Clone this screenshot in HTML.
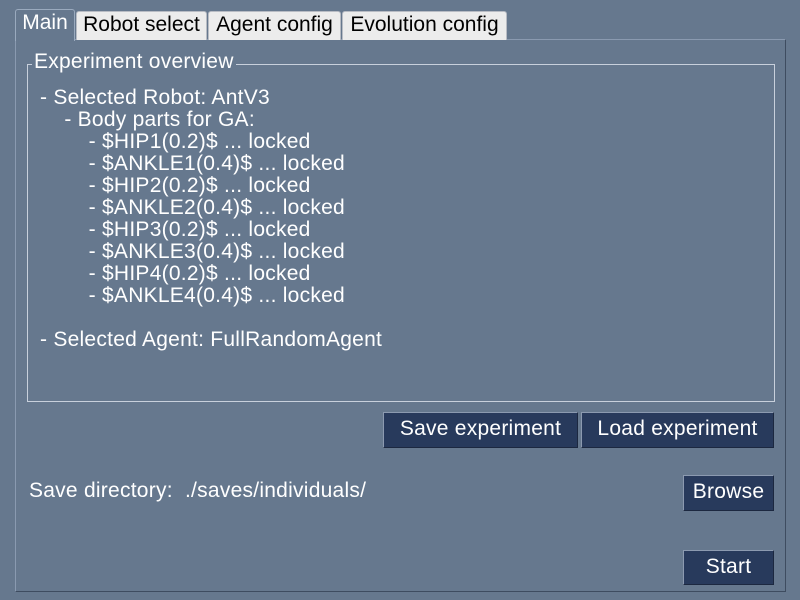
<!DOCTYPE html>
<html><head><style>
*{margin:0;padding:0;box-sizing:border-box}
body{width:800px;height:600px;background:#66788e;font-family:"Liberation Sans",sans-serif;font-size:21px;letter-spacing:0.25px;color:#fff;position:relative;overflow:hidden}
.a{position:absolute;white-space:pre}
.panel{position:absolute;left:15px;top:39px;width:771px;height:553px;border:1px solid #8a9ab0;border-right-color:#3e4c60;border-bottom-color:#3e4c60}
.tab{position:absolute;top:11px;height:29px;background:#ececec;color:#000;border:1px solid #b8bcc4;border-bottom:none;border-radius:3px 3px 0 0;text-align:center;line-height:25px;letter-spacing:0}
.main{position:absolute;left:15px;top:9px;width:60px;height:32px;background:#66788e;border:1px solid #9aaabe;border-bottom:none;border-radius:3px 3px 0 0;color:#fff;line-height:26px;text-align:center;letter-spacing:0}
.grp{position:absolute;left:27px;top:64px;width:748px;height:338px;border:1px solid #c8d0dc}
.btn{position:absolute;background:#283a5c;border:1px solid #8c9ab0;border-right-color:#1c2840;border-bottom-color:#1c2840;text-align:center;color:#fff;line-height:31px}
</style></head><body>
<div class="panel"></div>
<div class="tab" style="left:76px;width:131px">Robot select</div>
<div class="tab" style="left:208px;width:133px">Agent config</div>
<div class="tab" style="left:342px;width:165px">Evolution config</div>
<div class="main">Main</div>
<div class="grp"></div>
<div class="a" style="left:32px;top:50px;background:#66788e;padding:0 2px;line-height:24px">Experiment overview</div>
<div class="a" style="left:40px;top:87px;line-height:22px">- Selected Robot: AntV3
    - Body parts for GA:
        - $HIP1(0.2)$ ... locked
        - $ANKLE1(0.4)$ ... locked
        - $HIP2(0.2)$ ... locked
        - $ANKLE2(0.4)$ ... locked
        - $HIP3(0.2)$ ... locked
        - $ANKLE3(0.4)$ ... locked
        - $HIP4(0.2)$ ... locked
        - $ANKLE4(0.4)$ ... locked

- Selected Agent: FullRandomAgent</div>
<div class="btn" style="left:383px;top:412px;width:195px;height:36px">Save experiment</div>
<div class="btn" style="left:581px;top:412px;width:193px;height:36px">Load experiment</div>
<div class="a" style="left:29px;top:480px;line-height:22px">Save directory:  ./saves/individuals/</div>
<div class="btn" style="left:683px;top:475px;width:91px;height:36px">Browse</div>
<div class="btn" style="left:683px;top:550px;width:91px;height:35px">Start</div>
</body></html>
